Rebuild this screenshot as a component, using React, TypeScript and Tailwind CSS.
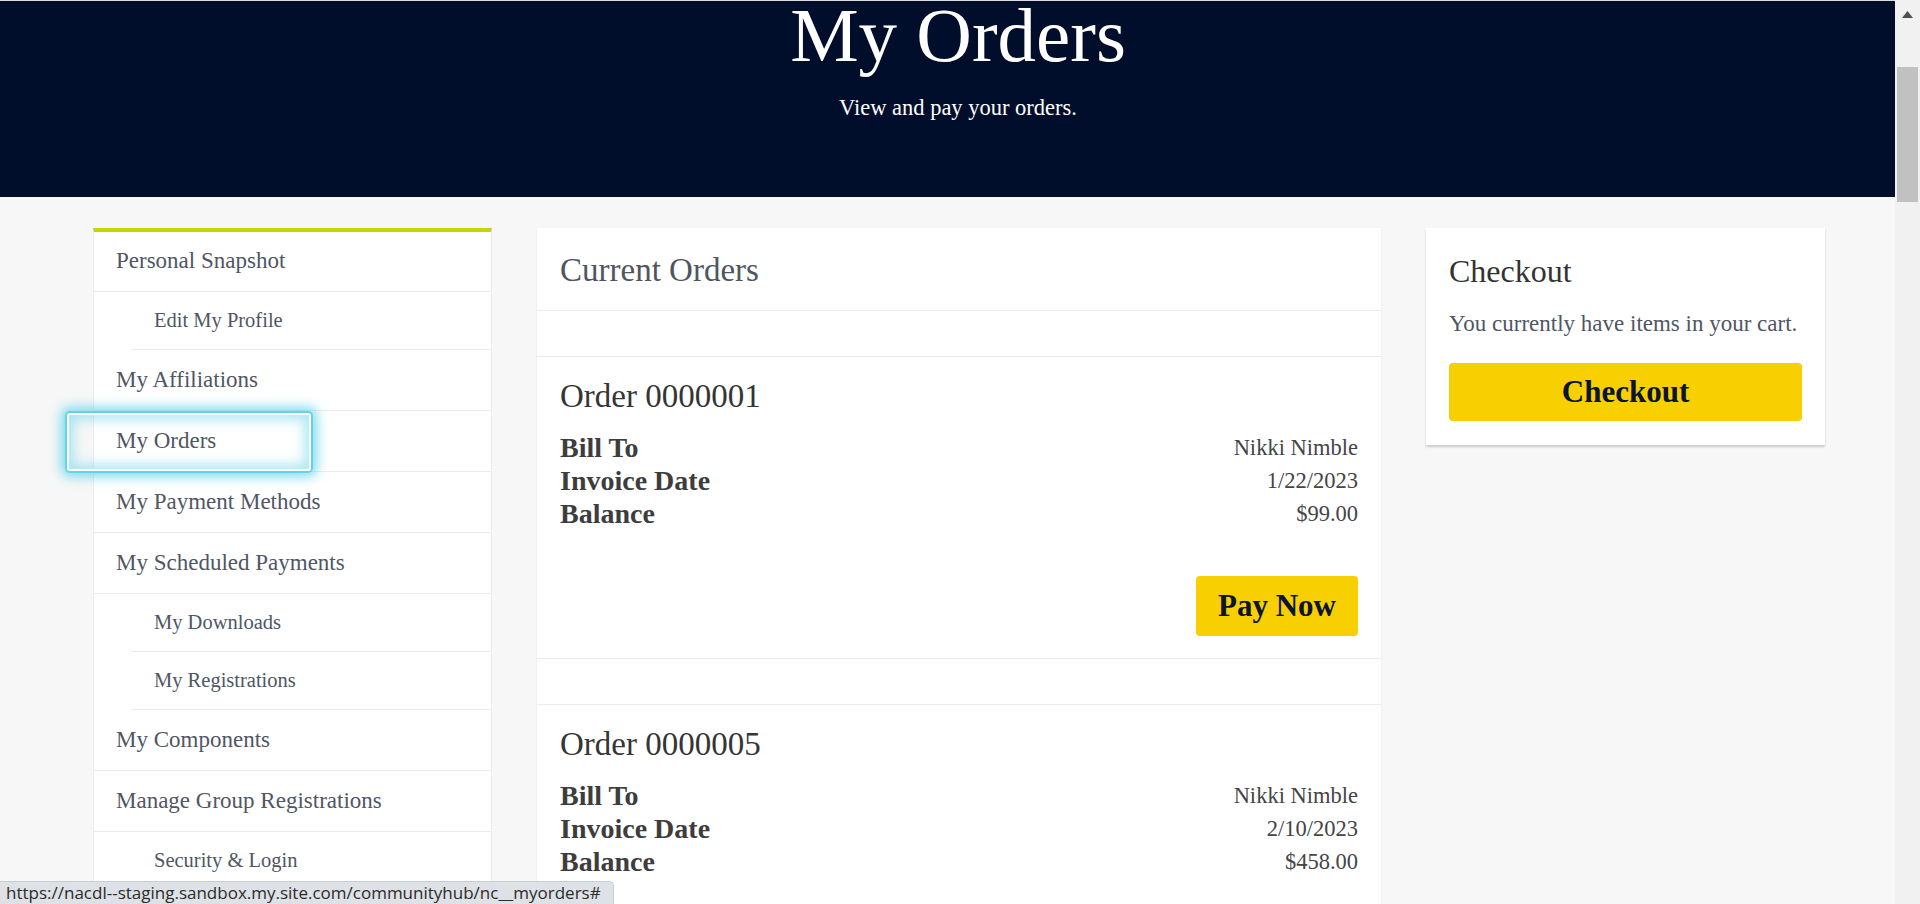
const serif = "font-['Liberation_Serif','Times_New_Roman',serif]";

type NavItem = { label: string; sub?: boolean; focused?: boolean };

const nav: NavItem[] = [
  { label: "Personal Snapshot" },
  { label: "Edit My Profile", sub: true },
  { label: "My Affiliations" },
  { label: "My Orders", focused: true },
  { label: "My Payment Methods" },
  { label: "My Scheduled Payments" },
  { label: "My Downloads", sub: true },
  { label: "My Registrations", sub: true },
  { label: "My Components" },
  { label: "Manage Group Registrations" },
  { label: "Security & Login", sub: true },
];

const orders = [
  { id: "0000001", billTo: "Nikki Nimble", date: "1/22/2023", balance: "$99.00", payable: true },
  { id: "0000005", billTo: "Nikki Nimble", date: "2/10/2023", balance: "$458.00", payable: false },
];

function Sidebar() {
  return (
    <nav className="w-[399px] shrink-0 self-start border-x border-[#ececec] border-t-4 border-t-[#c6d500] bg-white">
      {nav.map((item, i) =>
        item.sub ? (
          <div key={item.label} className="bg-white">
            <a
              href="#"
              className="ml-[37px] flex h-[58px] items-center border-b border-[#ececec] pl-[23px] text-[20.5px] text-[#505664]"
            >
              {item.label}
            </a>
          </div>
        ) : (
          <a
            key={item.label}
            href="#"
            className={`relative flex items-center border-b border-[#ececec] pl-[22px] text-[23px] text-[#505664] ${
              i === 0 ? "h-[60px]" : "h-[61px]"
            }`}
          >
            {item.focused && (
              <span className="pointer-events-none absolute -left-[27px] top-[2px] h-[58px] w-[244px] rounded-[3px] border-2 border-white shadow-[0_0_0_2px_#62d4ea,0_0_12px_6px_rgba(98,212,234,0.8),inset_0_0_12px_5px_rgba(98,212,234,0.5)]" />
            )}
            <span className="relative">{item.label}</span>
          </a>
        )
      )}
    </nav>
  );
}

function Order({ id, billTo, date, balance, payable }: (typeof orders)[number]) {
  return (
    <>
      <div className="h-[46px] border-b border-[#ececec]" />
      <div
        className={`border-b border-[#ececec] px-[23px] pt-[20px] ${payable ? "pb-[22px]" : "pb-[128px]"}`}
      >
        <h3 className="text-[33px] leading-[38px] text-[#353535]">Order {id}</h3>
        <div className="mt-[16px] text-[#3d3d3d]">
          {[
            ["Bill To", billTo],
            ["Invoice Date", date],
            ["Balance", balance],
          ].map(([k, v]) => (
            <div key={k} className="flex h-[33px] items-center justify-between leading-[33px]">
              <span className="text-[28px] font-bold">{k}</span>
              <span className="text-[22.5px] text-[#454545]">{v}</span>
            </div>
          ))}
        </div>
        {payable && (
          <div className="mt-[46px] flex justify-end">
            <button className="h-[60px] w-[162px] rounded-[4px] bg-[#f8cf00] text-[31px] font-bold text-[#0b1430]">
              Pay Now
            </button>
          </div>
        )}
      </div>
    </>
  );
}

export default function App() {
  return (
    <div className={`relative flex h-[904px] w-[1920px] overflow-hidden bg-[#f7f7f7] ${serif}`}>
      <div className="flex min-w-0 flex-1 flex-col">
        <div className="h-px shrink-0 bg-[#dcdcdc]" />
        <header className="flex h-[196px] shrink-0 flex-col items-center bg-[#000e2c] pl-[21px] pt-[4px] text-white">
          <h1 className="text-[77px] leading-[60px]">My Orders</h1>
          <p className="mt-[28px] text-[22.5px] leading-[30px]">View and pay your orders.</p>
        </header>

        <main className="flex shrink-0 gap-[45px] pl-[93px] pt-[31px]">
          <Sidebar />

          <section className="w-[844px] shrink-0 self-start bg-white shadow-[0_1px_2px_rgba(0,0,0,0.08)]">
            <div className="flex h-[83px] items-center border-b border-[#ececec] px-[23px]">
              <h2 className="pt-[4px] text-[33px] text-[#50555f]">Current Orders</h2>
            </div>
            {orders.map((o) => (
              <Order key={o.id} {...o} />
            ))}
          </section>

          <aside className="w-[399px] shrink-0 self-start bg-white px-[23px] pt-[24px] pb-[24px] shadow-[0_2px_2px_rgba(0,0,0,0.18)]">
            <h2 className="text-[32px] leading-[38px] text-[#333333]">Checkout</h2>
            <p className="mt-[19px] text-[23px] leading-[30px] text-[#505664]">
              You currently have items in your cart.
            </p>
            <button className="mt-[24px] h-[58px] w-full rounded-[4px] bg-[#f8cf00] text-[31px] font-bold text-[#0b1430]">
              Checkout
            </button>
          </aside>
        </main>
      </div>

      {/* browser scrollbar */}
      <div className="relative w-[25px] shrink-0 bg-[#f1f1f1]">
        <svg className="absolute left-[7px] top-[11px]" width="11" height="7" viewBox="0 0 11 7">
          <path d="M5.5 0 L11 7 L0 7 Z" fill="#505050" />
        </svg>
        <div className="absolute left-[2px] top-[67px] h-[135px] w-[21px] bg-[#c1c1c1]" />
      </div>

      {/* status bubble */}
      <div className="absolute bottom-0 left-0 flex h-[23px] w-[614px] items-center rounded-tr-[5px] border-t border-r border-[#c9ccd1] bg-[#dee1e6] pl-[6px] font-['Open_Sans',sans-serif] text-[17px] text-[#2b2b2b]">
        https://nacdl--staging.sandbox.my.site.com/communityhub/nc__myorders#
      </div>
    </div>
  );
}
